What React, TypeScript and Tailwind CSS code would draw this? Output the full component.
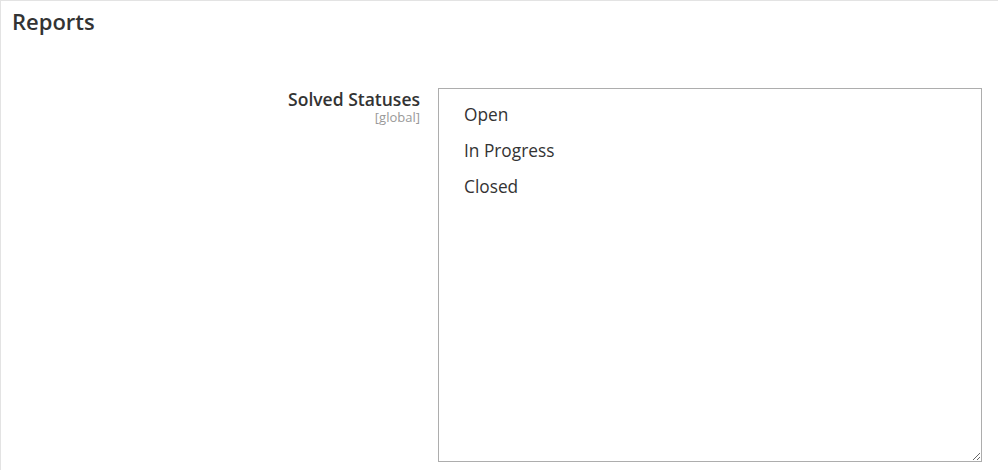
const options = ["Open", "In Progress", "Closed"];

export default function App() {
  return (
    <div
      className="h-[470px] w-[998px] border-l border-t border-[#e3e3e3] bg-white text-[#333]"
      style={{ fontFamily: '"Open Sans", "Liberation Sans", sans-serif' }}
    >
      <h2 className="pl-[11px] pt-[5px] text-[22px] font-semibold leading-[30px] text-[#333]">
        Reports
      </h2>
      <div className="mt-[53px] flex">
        <div className="w-[419px] shrink-0 text-right">
          <div className="text-[17.5px] font-semibold leading-[20px] text-[#333]">
            Solved Statuses
          </div>
          <div className="mt-[1px] text-[13px] leading-[15px] text-[#999]">[global]</div>
        </div>
        <div className="ml-[18px] mt-[-1px] h-[374px] w-[544px] resize overflow-auto border border-[#adadad] bg-white pl-[25px] pt-[14px]">
          {options.map((o) => (
            <div key={o} className="h-[36px] text-[17.3px] leading-[24px] text-[#333]">
              {o}
            </div>
          ))}
        </div>
      </div>
    </div>
  );
}
